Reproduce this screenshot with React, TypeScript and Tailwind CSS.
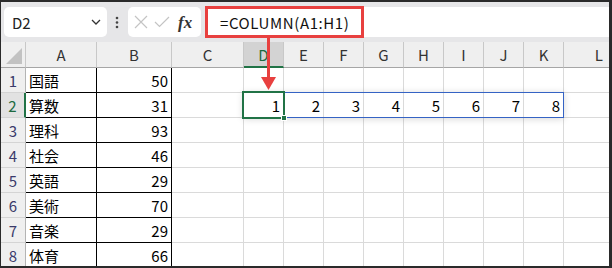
import React from 'react';

const cols = ['A', 'B', 'C', 'D', 'E', 'F', 'G', 'H', 'I', 'J', 'K', 'L'];

const subjects: [string, number][] = [
  ['国語', 50],
  ['算数', 31],
  ['理科', 93],
  ['社会', 46],
  ['英語', 29],
  ['美術', 70],
  ['音楽', 29],
  ['体育', 66],
];

function FormulaBar() {
  return (
    <div className="h-[40px] bg-[#e6e6e8] flex items-center pl-[3px] shrink-0">
      <div className="w-[103px] h-[30px] bg-white rounded-[5px] flex items-center pl-[8px] pr-[6px] justify-between">
        <span className="text-[15px] leading-none text-[#222]">D2</span>
        <svg width="10" height="6" viewBox="0 0 10 6">
          <polyline points="1,1 5,5 9,1" fill="none" stroke="#333" strokeWidth="1.3" />
        </svg>
      </div>
      <svg width="4" height="13" viewBox="0 0 4 13" className="ml-[8px]">
        <circle cx="2" cy="2" r="1.3" fill="#444" />
        <circle cx="2" cy="6.5" r="1.3" fill="#444" />
        <circle cx="2" cy="11" r="1.3" fill="#444" />
      </svg>
      <div className="ml-[9px] w-[73px] h-[30px] bg-white rounded-[5px] flex items-center pl-[6px] gap-[6px]">
        <svg width="14" height="14" viewBox="0 0 14 14">
          <path d="M1 1 L13 13 M13 1 L1 13" stroke="#c4c4c4" strokeWidth="1.2" fill="none" />
        </svg>
        <svg width="16" height="12" viewBox="0 0 16 12">
          <polyline points="1,6 5.5,10.5 15,1" stroke="#c4c4c4" strokeWidth="1.2" fill="none" />
        </svg>
        <span className="font-['Liberation_Serif',serif] italic font-bold text-[17px] leading-none text-[#333] ml-[2px]">fx</span>
      </div>
      <div className="ml-[4px] flex-1 h-[30px] bg-white flex items-center">
        <div className="w-[159px] h-[32px] border-[3px] border-[#e8403f] flex items-center pl-[12px]">
          <span className="text-[15px] leading-none text-[#111] tracking-[0.6px]">=COLUMN(A1:H1)</span>
        </div>
      </div>
    </div>
  );
}

function Sheet() {
  return (
    <div className="grid grid-cols-[25px_71px_75px_72px_repeat(8,40px)_1fr] grid-rows-[26px_repeat(8,25px)]">
      <div className="bg-[#efefef] border-r border-r-[#c8c8c8] border-b border-b-[#a6a6a6] flex items-end justify-end p-[3px]">
        <svg width="16" height="16" viewBox="0 0 16 16">
          <polygon points="0,16 16,16 16,0" fill="#c2c2c2" />
        </svg>
      </div>
      {cols.map((c) =>
        c === 'D' ? (
          <div
            key={c}
            className="bg-[#d3d3d3] border-r border-r-[#c8c8c8] border-b-2 border-b-[#217346] flex items-center justify-center text-[15px] leading-none text-[#1d6a3f]"
          >
            {c}
          </div>
        ) : (
          <div
            key={c}
            className={`bg-[#efefef] border-b border-b-[#a6a6a6] flex items-center text-[15px] leading-none text-[#333] ${
              c === 'L' ? 'justify-end pr-[6px]' : 'justify-center border-r border-r-[#c8c8c8]'
            }`}
          >
            {c}
          </div>
        )
      )}
      {subjects.map(([name, score], r) => (
        <React.Fragment key={name}>
          <div
            className={`flex items-center justify-center text-[15px] leading-none border-b border-b-[#d4d4d4] ${
              r === 1
                ? 'bg-[#e2e2e2] text-[#1d6a3f] border-r-2 border-r-[#217346]'
                : 'bg-[#efefef] text-[#3a3a6a] border-r border-r-[#b4b4b4]'
            }`}
          >
            {r + 1}
          </div>
          <div className="border-r border-b border-black flex items-center pl-[3px] text-[15px] leading-none text-black">
            {name}
          </div>
          <div className="border-r border-b border-black flex items-center justify-end pr-[3px] text-[15px] leading-none text-black">
            {score}
          </div>
          <div className="border-r border-b border-[#dadada]" />
          {Array.from({ length: 8 }).map((_, i) => (
            <div
              key={i}
              className={`border-r border-b border-[#dadada] flex items-center justify-end pr-[3px] text-[15px] leading-none text-black ${
                r === 1 && i === 0 ? 'relative' : ''
              }`}
            >
              {r === 1 ? i + 1 : ''}
              {r === 1 && i === 0 && (
                <>
                  <div className="absolute -left-px -top-px w-[321px] h-[26px] border border-[#3563c4] shadow-[0_1px_7px_rgba(0,0,0,0.16)] pointer-events-none" />
                  <div className="absolute -left-[2px] -top-[2px] -right-[2px] -bottom-[2px] border-2 border-[#217346] pointer-events-none">
                    <div className="absolute -right-[4px] -bottom-[4px] w-[6px] h-[6px] bg-[#217346] border border-white" />
                  </div>
                </>
              )}
            </div>
          ))}
          <div className="border-b border-[#dadada]" />
        </React.Fragment>
      ))}
    </div>
  );
}

export default function App() {
  return (
    <div className="w-[612px] h-[268px] relative overflow-hidden bg-white border-t-2 border-l border-r-[3px] border-b-2 border-[#2a2a2a] flex flex-col font-['Noto_Sans_CJK_JP','Noto_Sans',sans-serif]">
      <FormulaBar />
      <Sheet />
      <svg width="16" height="56" viewBox="0 0 16 56" className="absolute left-[260px] top-[33px] pointer-events-none">
        <rect x="6" y="0" width="3" height="44" fill="#e8403f" />
        <polygon points="0,42 15,42 7.5,55" fill="#e8403f" />
      </svg>
    </div>
  );
}
